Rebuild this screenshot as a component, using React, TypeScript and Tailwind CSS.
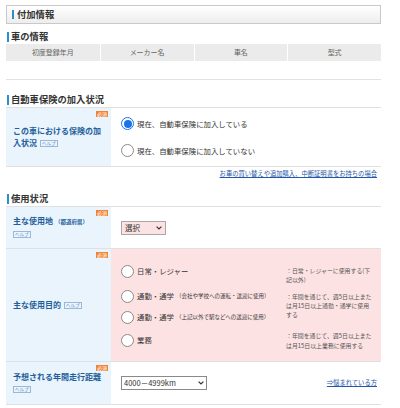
import type { ReactNode } from 'react';

const font = { fontFamily: '"Noto Sans CJK JP", "Noto Sans", sans-serif' };

function Heading({ children }: { children: ReactNode }) {
  return (
    <div className="flex items-center h-[12px] pl-[1px]">
      <span className="w-[2px] h-[10px] bg-[#2b8fc9]" />
      <span className="ml-[2px] text-[9.3px] font-bold text-[#333] leading-none">{children}</span>
    </div>
  );
}

function Badge() {
  return (
    <span className="absolute top-[3px] right-[3px] bg-[#f08232] text-white text-[5px] leading-[6px] px-[1px]">
      必須
    </span>
  );
}

function Help() {
  return (
    <span className="inline-block border border-[#9cb8d8] text-[#5d8cc4] text-[4.5px] leading-[5px] px-[1px] font-normal align-middle">
      ヘルプ
    </span>
  );
}

function Radio({ checked = false }: { checked?: boolean }) {
  if (checked) {
    return (
      <span className="flex items-center justify-center w-[13px] h-[13px] rounded-full border-[1.5px] border-[#1a73e8] bg-white shrink-0">
        <span className="w-[8px] h-[8px] rounded-full bg-[#1a73e8]" />
      </span>
    );
  }
  return <span className="w-[13px] h-[13px] rounded-full border border-[#8a8a8a] bg-white shrink-0" />;
}

function Chevron() {
  return (
    <svg width="6" height="4" viewBox="0 0 6 4" className="shrink-0">
      <path d="M0.6 0.6 L3 3 L5.4 0.6" fill="none" stroke="#333" strokeWidth="1.2" />
    </svg>
  );
}

function LabelCell({ children }: { children: ReactNode }) {
  return (
    <div className="relative w-[105px] shrink-0 bg-[#eaf4fc] flex items-center pl-[7px] pr-[8px]">
      <Badge />
      <div className="text-[8px] leading-[12px] font-bold text-[#1f5f9c]">{children}</div>
    </div>
  );
}

export default function App() {
  return (
    <div style={font} className="w-[400px] h-[408px] overflow-hidden bg-white pl-[6px] pt-[5px]">
      <div className="w-[375px]">
        {/* 付加情報 */}
        <div className="h-[19px] border border-[#c9c9c9] bg-gradient-to-b from-white to-[#ededed] flex items-center pl-[5px]">
          <span className="w-[2px] h-[9px] bg-[#2b8fc9]" />
          <span className="ml-[3px] text-[9.3px] font-bold text-[#333] leading-none">付加情報</span>
        </div>

        {/* 車の情報 */}
        <div className="mt-[7px]">
          <Heading>車の情報</Heading>
        </div>
        <div className="mt-[1px] grid grid-cols-4 h-[17px] bg-[#ebebeb] text-[7px] text-[#666]">
          <div className="flex items-center justify-center">初度登録年月</div>
          <div className="flex items-center justify-center border-l border-white">メーカー名</div>
          <div className="flex items-center justify-center border-l border-white">車名</div>
          <div className="flex items-center justify-center border-l border-white">型式</div>
        </div>
        <div className="h-[19px] border-b border-[#e2e2e2]" />

        {/* 自動車保険の加入状況 */}
        <div className="mt-[14px]">
          <Heading>自動車保険の加入状況</Heading>
        </div>
        <div className="mt-[1px] flex h-[60px] border-y border-[#e0e0e0]">
          <LabelCell>
            この車における保険の加
            <br />
            <span className="inline-flex items-center gap-[3px]">
              <span>入状況</span>
              <Help />
            </span>
          </LabelCell>
          <div className="flex-1 pl-[10px] pt-[9px] text-[7.4px] text-[#333]">
            <div className="flex items-center h-[13px]">
              <Radio checked />
              <span className="ml-[3px]">現在、自動車保険に加入している</span>
            </div>
            <div className="flex items-center h-[13px] mt-[14px]">
              <Radio />
              <span className="ml-[3px]">現在、自動車保険に加入していない</span>
            </div>
          </div>
        </div>
        <div className="flex justify-end pr-[4px] mt-[2px]">
          <a className="text-[6.3px] leading-[10px] text-[#2356a8] underline">
            お車の買い替えや追加購入、中断証明書をお持ちの場合
          </a>
        </div>

        {/* 使用状況 */}
        <div className="mt-[14px]">
          <Heading>使用状況</Heading>
        </div>
        <div className="mt-[1px] flex h-[43px] border-y border-[#e0e0e0]">
          <LabelCell>
            主な使用地<span className="text-[5.5px] ml-[2px]">（都道府県）</span>
            <br />
            <Help />
          </LabelCell>
          <div className="flex-1 flex items-center pl-[10px]">
            <div className="w-[45px] h-[14px] bg-[#fde2e3] border border-[#a8a8a8] flex items-center justify-between px-[3px] text-[7.5px] text-[#333]">
              <span>選択</span>
              <Chevron />
            </div>
          </div>
        </div>
        <div className="flex h-[113px] border-b border-[#e0e0e0]">
          <LabelCell>
            <span className="inline-flex items-center gap-[3px]">
              <span>主な使用目的</span>
              <Help />
            </span>
          </LabelCell>
          <div className="flex-1 bg-[#fde2e3] pl-[10px] pr-[7px] pt-[15px] text-[7.4px] text-[#333]">
            <div className="flex h-[25px]">
              <div className="flex-1 flex items-center h-[14px]">
                <Radio />
                <span className="ml-[3px]">日常・レジャー</span>
              </div>
              <div className="w-[88px] pt-[3px] text-[5.9px] leading-[8.5px] text-[#555]">
                ：日常・レジャーに使用する(下記以外)
              </div>
            </div>
            <div className="flex h-[21px]">
              <div className="flex-1 flex items-center h-[14px] whitespace-nowrap">
                <Radio />
                <span className="ml-[3px]">通勤・通学</span>
                <span className="ml-[2px] text-[5.5px]">（会社や学校への運転・送迎に使用）</span>
              </div>
              <div className="w-[88px] pt-[3px] text-[5.9px] leading-[9px] text-[#555]">
                ：年間を通じて、週5日以上または月15日以上通勤・通学に使用する
              </div>
            </div>
            <div className="flex h-[23px]">
              <div className="flex-1 flex items-center h-[14px] whitespace-nowrap">
                <Radio />
                <span className="ml-[3px]">通勤・通学</span>
                <span className="ml-[2px] text-[5.5px]">（上記以外で駅などへの送迎に使用）</span>
              </div>
              <div className="w-[88px]" />
            </div>
            <div className="flex h-[29px]">
              <div className="flex-1 flex items-center h-[14px]">
                <Radio />
                <span className="ml-[3px]">業務</span>
              </div>
              <div className="w-[88px] -mt-[2px] text-[5.9px] leading-[10px] text-[#555]">
                ：年間を通じて、週5日以上または月15日以上業務に使用する
              </div>
            </div>
          </div>
        </div>
        <div className="flex h-[43px] border-b border-[#e0e0e0]">
          <LabelCell>
            予想される年間走行距離
            <br />
            <Help />
          </LabelCell>
          <div className="flex-1 flex items-center pl-[10px] pr-[4px]">
            <div className="w-[86px] h-[14px] bg-white border border-[#8a8a8a] flex items-center justify-between px-[2px] text-[7.5px] text-[#333]">
              <span>4000－4999km</span>
              <Chevron />
            </div>
            <a className="ml-auto text-[6.3px] text-[#2356a8] underline">⇒悩まれている方</a>
          </div>
        </div>
      </div>
    </div>
  );
}
